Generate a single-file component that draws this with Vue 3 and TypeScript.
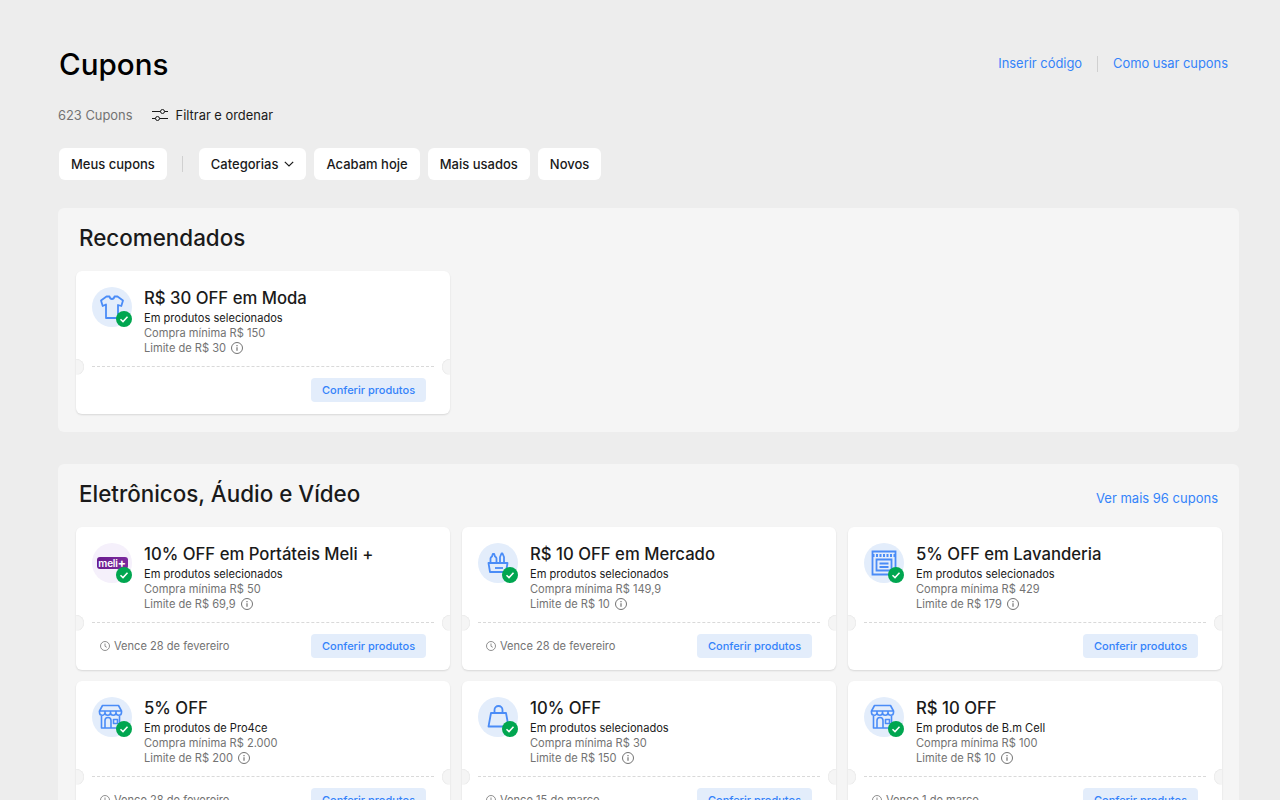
<script setup lang="ts">
interface Coupon {
  title: string;
  scope: string;
  min: string;
  limit: string;
  expires?: string;
  icon: "shirt" | "meli" | "basket" | "washer" | "store" | "bag";
}

const filters = ["Acabam hoje", "Mais usados", "Novos"];

const recommended: Coupon[] = [
  { title: "R$ 30 OFF em Moda", scope: "Em produtos selecionados", min: "Compra mínima R$ 150", limit: "Limite de R$ 30", icon: "shirt" },
];

const electronics: Coupon[] = [
  { title: "10% OFF em Portáteis Meli +", scope: "Em produtos selecionados", min: "Compra mínima R$ 50", limit: "Limite de R$ 69,9", expires: "Vence 28 de fevereiro", icon: "meli" },
  { title: "R$ 10 OFF em Mercado", scope: "Em produtos selecionados", min: "Compra mínima R$ 149,9", limit: "Limite de R$ 10", expires: "Vence 28 de fevereiro", icon: "basket" },
  { title: "5% OFF em Lavanderia", scope: "Em produtos selecionados", min: "Compra mínima R$ 429", limit: "Limite de R$ 179", icon: "washer" },
  { title: "5% OFF", scope: "Em produtos de Pro4ce", min: "Compra mínima R$ 2.000", limit: "Limite de R$ 200", expires: "Vence 28 de fevereiro", icon: "store" },
  { title: "10% OFF", scope: "Em produtos selecionados", min: "Compra mínima R$ 30", limit: "Limite de R$ 150", expires: "Vence 15 de março", icon: "bag" },
  { title: "R$ 10 OFF", scope: "Em produtos de B.m Cell", min: "Compra mínima R$ 100", limit: "Limite de R$ 10", expires: "Vence 1 de março", icon: "store" },
];

const sections = [
  { name: "Recomendados", more: "", coupons: recommended },
  { name: "Eletrônicos, Áudio e Vídeo", more: "Ver mais 96 cupons", coupons: electronics },
];
</script>

<template>
  <main class="page">
    <header class="top">
      <h1>Cupons</h1>
      <nav class="links">
        <a>Inserir código</a>
        <span class="links-sep"></span>
        <a>Como usar cupons</a>
      </nav>
    </header>

    <div class="count-row">
      <span class="count">623 Cupons</span>
      <span class="filter-toggle">
        <svg viewBox="0 0 16 16" width="16" height="16" fill="none" stroke="#1a1a1a" stroke-width="1">
          <path d="M0 4.500h8.500M12.500 4.500H16M0 11.500h3.500M7.500 11.500H16" />
          <circle cx="10.500" cy="4.500" r="2" />
          <circle cx="5.500" cy="11.500" r="2" />
        </svg>
        Filtrar e ordenar
      </span>
    </div>

    <div class="chips">
      <button class="chip">Meus cupons</button>
      <span class="chip-sep"></span>
      <button class="chip">
        Categorias
        <svg viewBox="0 0 10 6" width="10" height="6" fill="none" stroke="#1a1a1a" stroke-width="1.200">
          <path d="M.8.8 5 5l4.200-4.200" />
        </svg>
      </button>
      <button v-for="f in filters" :key="f" class="chip">{{ f }}</button>
    </div>

    <section v-for="s in sections" :key="s.name" class="section">
      <div class="section-head">
        <h2>{{ s.name }}</h2>
        <a v-if="s.more" class="more">{{ s.more }}</a>
      </div>
      <div class="grid">
        <article v-for="c in s.coupons" :key="c.title + c.limit" class="card">
          <div class="card-body">
            <div class="thumb" :class="{ 'thumb-meli': c.icon === 'meli' }">
              <svg v-if="c.icon === 'shirt'" viewBox="0 0 40 40" width="40" height="40" fill="none" stroke="#4a8cf7" stroke-width="1.800" stroke-linejoin="round">
                <path d="M14.500 9.500h3c.4 1.700 1.300 2.500 2.500 2.500s2.100-.8 2.500-2.500h3l5.500 4-1.700 5.500-3.300-1v13H14V17.500L10.700 19 9 13.500z" />
              </svg>
              <div v-else-if="c.icon === 'meli'" class="meli-logo">meli<b>+</b></div>
              <svg v-else-if="c.icon === 'basket'" viewBox="0 0 40 40" width="40" height="40" fill="none" stroke="#4a8cf7" stroke-width="1.800" stroke-linejoin="round">
                <path d="M12.500 20v-4.500c0-1 .8-1.500 1.500-2l.8-2.500h1.400l.8 2.500c.7.500 1.500 1 1.500 2V20" />
                <path d="M22 20v-6l1.500-3.500h1l1.500 3.500v6" />
                <path d="M10.500 20h19l-1.500 9H12z" />
                <path d="M17 25h8" />
              </svg>
              <svg v-else-if="c.icon === 'washer'" viewBox="0 0 40 40" width="40" height="40" fill="none" stroke="#4a8cf7" stroke-width="1.800">
                <path d="M8.500 8.500h23v23h-23z" />
                <path d="M8.500 12.500h23" stroke-dasharray="2 1.500" stroke-width="3" />
                <path d="M12.500 16.500h15v11h-15zM15.500 20.500h9M15.500 24h9" />
              </svg>
              <svg v-else-if="c.icon === 'store'" viewBox="0 0 40 40" width="40" height="40" fill="none" stroke="#4a8cf7" stroke-width="1.600" stroke-linejoin="round">
                <path d="M10.500 8.500h16l3 5.500h-22z" />
                <path d="M7.500 14v1.500a2.750 2.750 0 0 0 5.500 0V14m0 1.500a2.750 2.750 0 0 0 5.500 0V14m0 1.500a2.750 2.750 0 0 0 5.500 0V14m0 1.500a2.750 2.750 0 0 0 5.500 0V14" />
                <path d="M9.500 19v12h18V19" />
                <path d="M13 31v-7.500a3 3 0 0 1 6 0V31" />
                <path d="M21.500 22.500h4v4h-4z" />
              </svg>
              <svg v-else viewBox="0 0 40 40" width="40" height="40" fill="none" stroke="#4a8cf7" stroke-width="1.800" stroke-linejoin="round">
                <path d="M13 16h15l2.500 13.500h-20z" />
                <path d="M16.500 16v-3a4 4 0 0 1 8 0v3" />
              </svg>
              <span class="check">
                <svg viewBox="0 0 16 16" width="16" height="16" fill="none" stroke="#fff" stroke-width="1.500">
                  <path d="M4.500 8.300 7 10.600l4.500-4.800" />
                </svg>
              </span>
            </div>
            <div class="info">
              <h3>{{ c.title }}</h3>
              <p class="scope">{{ c.scope }}</p>
              <p class="terms">{{ c.min }}</p>
              <p class="terms limit">
                {{ c.limit }}
                <svg viewBox="0 0 12 12" width="12" height="12" fill="none" stroke="#737373">
                  <circle cx="6" cy="6" r="5.500" />
                  <path d="M6 5.200v3.600" stroke-width="1.200" />
                  <path d="M6 3v1.200" stroke-width="1.200" />
                </svg>
              </p>
            </div>
          </div>
          <div class="divider"></div>
          <div class="card-foot">
            <span v-if="c.expires" class="expires">
              <svg viewBox="0 0 10 10" width="10" height="10" fill="none" stroke="#737373" stroke-width=".8">
                <circle cx="5" cy="5" r="4.500" />
                <path d="M5 2.500V5.300l1.800 1" />
              </svg>
              {{ c.expires }}
            </span>
            <button class="cta">Conferir produtos</button>
          </div>
        </article>
      </div>
    </section>
  </main>
</template>

<style>
html,
body {
  margin: 0;
  background: #ededed;
  overflow: hidden;
  height: 800px;
}
</style>

<style scoped>
.page {
  width: 1181px;
  margin-left: 58px;
  font-family: Inter, "Liberation Sans", sans-serif;
  color: #1a1a1a;
}

.top {
  height: 108px;
  display: flex;
  justify-content: space-between;
  align-items: center;
  box-sizing: border-box;
  padding: 20px 11px 0 1px;
}

h1 {
  margin: 0;
  font-size: 29.600px;
  font-weight: 500;
  color: #000;
}

.links {
  display: flex;
  align-items: center;
  gap: 15px;
  font-size: 12.900px;
  color: #3483fa;
  margin-top: -1px;
}

.links-sep {
  width: 1px;
  height: 16px;
  background: #d0d0d0;
}

.count-row {
  height: 20px;
  display: flex;
  align-items: center;
  font-size: 12.900px;
  margin-top: -3px;
}

.count {
  color: #737373;
  margin-right: 19px;
}

.filter-toggle {
  display: flex;
  align-items: center;
  gap: 8px;
}

.chips {
  display: flex;
  align-items: center;
  gap: 8px;
  margin-top: 23px;
  padding-left: 1px;
}

.chip {
  height: 32px;
  padding: 0 12px;
  border: 0;
  border-radius: 6px;
  background: #fff;
  font: 500 13px Inter, "Liberation Sans", sans-serif;
  color: #1a1a1a;
  display: flex;
  align-items: center;
  gap: 6px;
}

.chip-sep {
  width: 1px;
  height: 16px;
  background: #d0d0d0;
  margin: 0 7.500px;
}

.section {
  background: #f5f5f5;
  border-radius: 6px;
  padding: 0 17px 18.500px 18px;
  margin-bottom: 32px;
}

.chips + .section {
  margin-top: 28px;
}

.section-head {
  height: 63px;
  box-sizing: border-box;
  padding: 16px 4px 0 3px;
  display: flex;
  justify-content: space-between;
  align-items: flex-start;
}

h2 {
  margin: 0;
  font-size: 22.400px;
  line-height: 28px;
  font-weight: 500;
  color: #1a1a1a;
}

.more {
  font-size: 13px;
  color: #3483fa;
  margin-top: 10px;
}

.grid {
  display: grid;
  grid-template-columns: repeat(3, 374px);
  gap: 11.500px 12px;
}

.card {
  position: relative;
  height: 142.500px;
  background: #fff;
  border-radius: 6px;
  box-shadow: 0 1px 2px rgba(0, 0, 0, 0.12);
  display: flex;
  flex-direction: column;
}

.card::before,
.card::after {
  content: "";
  position: absolute;
  top: 87.500px;
  width: 16px;
  height: 16px;
  border-radius: 50%;
  background: #f5f5f5;
  box-shadow: inset 0 0 1px rgba(0, 0, 0, 0.18);
}

.card::before {
  left: -8px;
  clip-path: inset(0 0 0 8px);
}

.card::after {
  right: -8px;
  clip-path: inset(0 8px 0 0);
}

.card-body {
  height: 95px;
  box-sizing: border-box;
  padding: 16px 16px 0;
  display: flex;
  gap: 12px;
}

.thumb {
  position: relative;
  width: 40px;
  height: 40px;
  flex: none;
  border-radius: 50%;
  background: #e3edfb;
}

.thumb-meli {
  background: #f5f0fb;
  display: flex;
  align-items: center;
  justify-content: center;
}

.meli-logo {
  width: 31px;
  height: 12px;
  border-radius: 3px;
  background: linear-gradient(90deg, #6a1b8e, #7c2a9e);
  color: #fff;
  font-size: 10px;
  font-weight: 600;
  line-height: 12px;
  letter-spacing: -0.2px;
  text-align: center;
}

.meli-logo b {
  font-size: 12px;
  font-weight: 700;
}

.check {
  position: absolute;
  right: 0;
  bottom: 0;
  width: 16px;
  height: 16px;
  border-radius: 50%;
  background: #00a650;
  display: flex;
}

.info {
  min-width: 0;
}

h3 {
  margin: 0 0 1.500px;
  font-size: 16.700px;
  line-height: 22px;
  font-weight: 500;
  color: #1a1a1a;
  white-space: nowrap;
}

.scope,
.terms {
  margin: 0;
  font-size: 11.100px;
  line-height: 15px;
  white-space: nowrap;
}

.terms {
  color: #737373;
}

.limit {
  display: flex;
  align-items: center;
  gap: 5px;
}

.divider {
  margin: 0 16px;
  border-top: 1px dashed #d9d9d9;
}

.card-foot {
  flex: 1;
  padding: 0 24px 0 24px;
  display: flex;
  align-items: center;
  justify-content: flex-end;
}

.expires {
  margin-right: auto;
  display: flex;
  align-items: center;
  gap: 4px;
  font-size: 11.100px;
  color: #737373;
}

.cta {
  height: 24px;
  width: 115px;
  padding: 0;
  border: 0;
  border-radius: 4px;
  background: #e3edfb;
  color: #3483fa;
  font: 500 11px Inter, "Liberation Sans", sans-serif;
}
</style>
